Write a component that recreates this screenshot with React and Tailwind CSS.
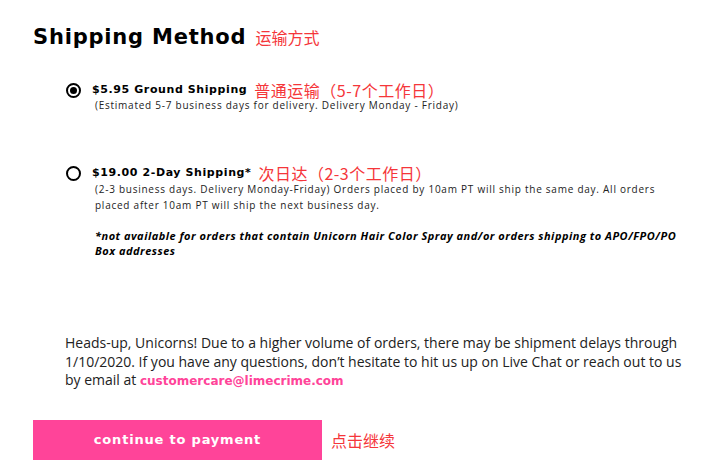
export default function App() {
  const head = "font-['DejaVu_Sans','Noto_Sans_CJK_SC',sans-serif]";
  const body = "font-['Open_Sans','Noto_Sans_CJK_SC',sans-serif]";
  const cjk = "font-['Noto_Sans_CJK_SC',sans-serif] text-[16px] text-[#f5363a] [text-spacing-trim:space-all]";
  return (
    <div className="w-[711px] h-[476px] bg-white pl-[33px] pt-[22px] overflow-hidden">
      <div className="flex items-center h-[30px]">
        <h1 className={`${head} text-[21px] font-bold text-black leading-[30px] tracking-[0.8px]`}>Shipping Method</h1>
        <span className={`${cjk} ml-[9px] leading-[30px]`}>运输方式</span>
      </div>

      <div className="ml-[33px] mt-[30px]">
        <div className="flex items-center h-[16px]">
          <span className="w-[15px] h-[15px] rounded-full border-2 border-black flex items-center justify-center shrink-0">
            <span className="w-[7px] h-[7px] rounded-full bg-black"></span>
          </span>
          <span className={`${head} ml-[11px] text-[11px] leading-[16px] font-bold text-black tracking-[0.6px]`}>$5.95 Ground Shipping</span>
          <span className={`${cjk} ml-[7px] leading-[16px] tracking-[0.5px]`}>普通运输（5-7个工作日）</span>
        </div>
        <div className={`${body} ml-[29px] text-[10px] leading-[14px] tracking-[0.75px] text-[#222]`}>
          (Estimated 5-7 business days for delivery. Delivery Monday - Friday)
        </div>
      </div>

      <div className="ml-[33px] mt-[53px]">
        <div className="flex items-center h-[16px]">
          <span className="w-[15px] h-[15px] rounded-full border-2 border-black shrink-0"></span>
          <span className={`${head} ml-[11px] text-[11px] leading-[16px] font-bold text-black tracking-[0.6px]`}>$19.00 2-Day Shipping*</span>
          <span className={`${cjk} ml-[7px] leading-[16px] tracking-[0.5px]`}>次日达（2-3个工作日）</span>
        </div>
        <div className={`${body} ml-[29px] w-[592px] text-[10px] leading-[16px] tracking-[0.75px] text-[#222]`}>
          (2-3 business days. Delivery Monday-Friday) Orders placed by 10am PT will ship the same day. All orders placed after 10am PT will ship the next business day.
        </div>
        <div className={`${body} ml-[29px] mt-[15px] w-[592px] text-[11px] leading-[15px] tracking-[0.5px] font-bold italic text-black`}>
          *not available for orders that contain Unicorn Hair Color Spray and/or orders shipping to APO/FPO/PO Box addresses
        </div>
      </div>

      <p className={`${body} ml-[32px] mt-[76px] w-[620px] text-[14px] leading-[18.5px] text-[#222]`}>
        Heads-up, Unicorns! Due to a higher volume of orders, there may be shipment delays through 1/10/2020. If you have any questions, don’t hesitate to hit us up on Live Chat or reach out to us by email at{' '}
        <span className={`${head} font-bold text-[#ff4499] text-[12px] leading-none`}>customercare@limecrime.com</span>
      </p>

      <div className="flex items-center mt-[30px]">
        <button className={`${head} w-[289px] h-[40px] bg-[#ff4499] text-white text-[13px] font-bold tracking-[0.8px] flex items-center justify-center`}>
          continue to payment
        </button>
        <span className={`${cjk} ml-[9px]`}>点击继续</span>
      </div>
    </div>
  );
}
